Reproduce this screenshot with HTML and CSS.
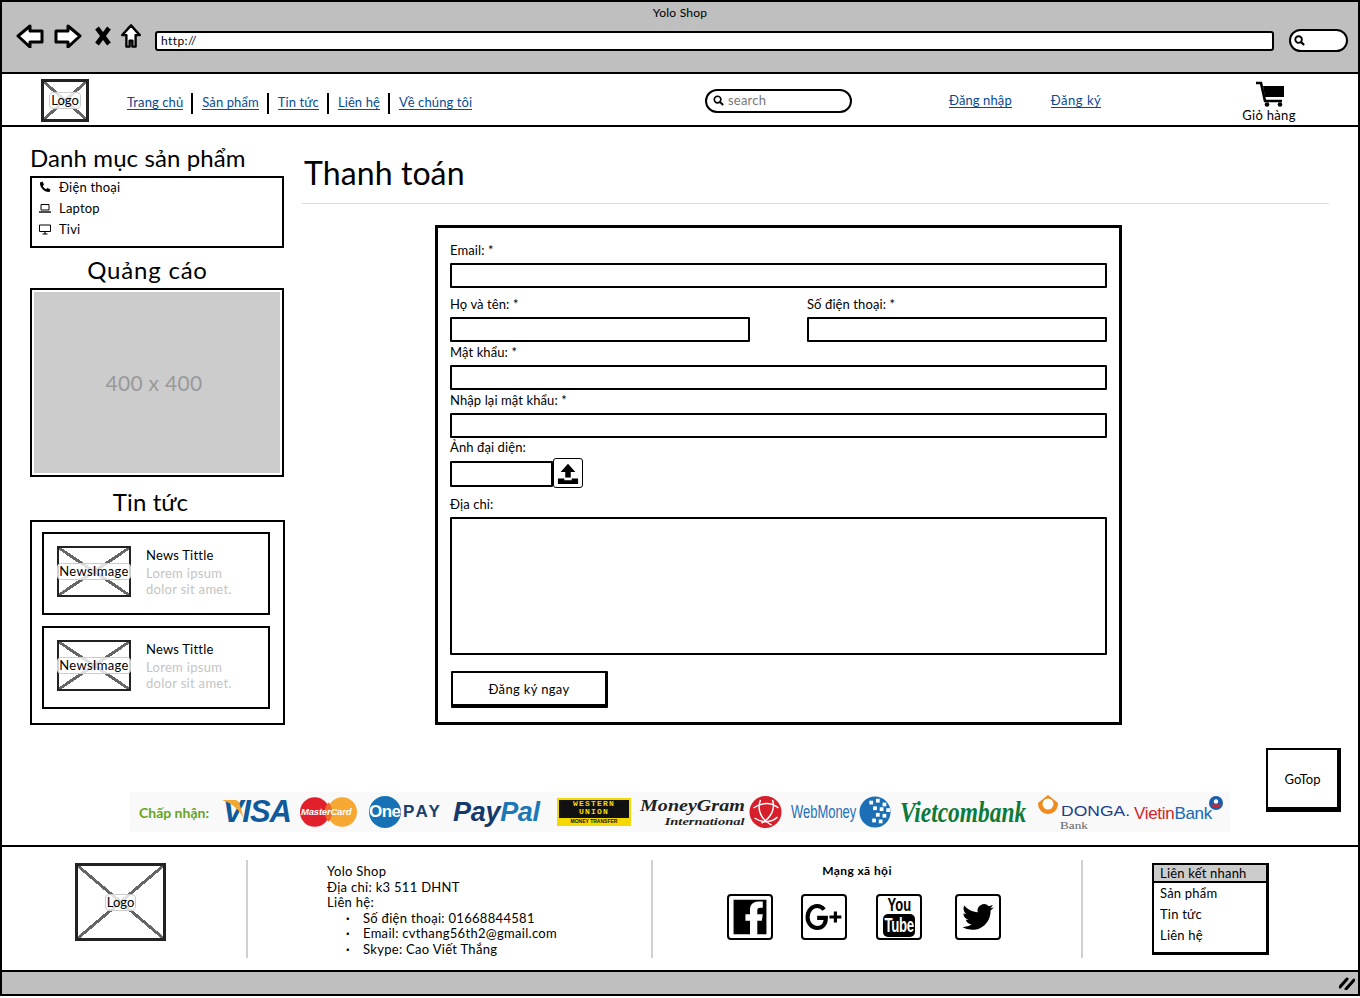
FILE: index.html
```html
<!DOCTYPE html>
<html lang="vi">
<head>
<meta charset="utf-8">
<title>Yolo Shop</title>
<link rel="stylesheet" href="styles.css">
</head>
<body>
<div class="window">
  <div class="chrome">
    <div class="chrome-title">Yolo Shop</div>
    <div class="toolbar">
      <svg class="tb-icon tb-back" viewBox="0 0 28 24"><path d="M2 12 14 2V7H26V18H14V23Z" fill="#fff" stroke="#000" stroke-width="3" stroke-linejoin="round"/></svg>
      <svg class="tb-icon tb-fwd" viewBox="0 0 28 24"><path d="M26 12 14 2V7H2V18H14V23Z" fill="#fff" stroke="#000" stroke-width="3" stroke-linejoin="round"/></svg>
      <svg class="tb-icon tb-x" viewBox="0 0 16 20"><path d="M2 2 14 18M14 2 2 18" fill="none" stroke="#000" stroke-width="4.6"/></svg>
      <svg class="tb-icon tb-home" viewBox="0 0 22 26"><path d="M11 1.500 1.500 12H6V24.500H9.500V18H12.500V24.500H16V12H20.500Z" fill="#fff" stroke="#000" stroke-width="2.600" stroke-linejoin="round"/></svg>
      <div class="url">http://</div>
      <div class="chrome-search">
        <svg class="search-glyph" viewBox="0 0 12 12"><circle cx="5" cy="5" r="3.600" fill="none" stroke="#000" stroke-width="2"/><path d="M7.500 7.500 11 11" stroke="#000" stroke-width="2.400"/></svg>
      </div>
    </div>
  </div>

  <header class="site-header">
    <div class="ph ph-logo"><span class="ph-label">Logo</span></div>
    <nav class="nav">
      <a class="link" href="#">Trang chủ</a>
      <a class="link" href="#">Sản phẩm</a>
      <a class="link" href="#">Tin tức</a>
      <a class="link" href="#">Liên hệ</a>
      <a class="link" href="#">Về chúng tôi</a>
    </nav>
    <div class="site-search">
      <svg class="search-glyph" viewBox="0 0 12 12"><circle cx="5" cy="5" r="3.600" fill="none" stroke="#000" stroke-width="1.800"/><path d="M7.500 7.500 11 11" stroke="#000" stroke-width="2.200"/></svg>
      <span>search</span>
    </div>
    <div class="auth">
      <a class="link" href="#">Đăng nhập</a>
      <a class="link" href="#">Đăng ký</a>
    </div>
    <div class="cart">
      <svg class="cart-icon" viewBox="0 0 30 26"><path d="M1 2H6L10 20H27" fill="none" stroke="#000" stroke-width="2.600"/><path d="M8 5H29V16H10Z"/><circle cx="12" cy="23.500" r="2.300"/><circle cx="25" cy="23.500" r="2.300"/></svg>
      <span>Giỏ hàng</span>
    </div>
  </header>

  <main class="main">
    <div class="content">
      <aside class="sidebar">
        <h2 class="side-title side-title-first">Danh mục sản phẩm</h2>
        <ul class="cats">
          <li><svg class="cat-icon" viewBox="0 0 12 12"><path d="M1 1.500 3.500.500 5 3.500 3.800 5C4.500 6.500 5.500 7.500 7 8.200L8.500 7 11.500 8.500 10.500 11C5.500 11.500.500 6.500 1 1.500Z"/></svg>Điện thoại</li>
          <li><svg class="cat-icon" viewBox="0 0 12 12"><path d="M2 2.500H10V8H2Z" fill="none" stroke="#000"/><path d="M0 10H12" stroke="#000" stroke-width="1.400"/></svg>Laptop</li>
          <li><svg class="cat-icon" viewBox="0 0 12 12"><path d="M.5 2H11.500V8.500H.5Z" fill="none" stroke="#000"/><path d="M3.500 11H8.500M6 8.500V11" stroke="#000" stroke-width="1.200"/></svg>Tivi</li>
        </ul>
        <h2 class="side-title side-title-ad">Quảng cáo</h2>
        <div class="ad"><div class="ad-inner">400 x 400</div></div>
        <h2 class="side-title side-title-news">Tin tức</h2>
        <div class="news">
          <article class="news-card">
            <div class="ph ph-news"><span class="ph-label">NewsImage</span></div>
            <div class="news-text">
              <h3>News Tittle</h3>
              <p>Lorem ipsum<br>dolor sit amet.</p>
            </div>
          </article>
          <article class="news-card">
            <div class="ph ph-news"><span class="ph-label">NewsImage</span></div>
            <div class="news-text">
              <h3>News Tittle</h3>
              <p>Lorem ipsum<br>dolor sit amet.</p>
            </div>
          </article>
        </div>
      </aside>

      <section class="checkout">
        <h1 class="page-title">Thanh toán</h1>
        <form class="form">
          <label class="lbl">Email: *</label>
          <input class="inp" type="text">
          <div class="two-col">
            <div>
              <label class="lbl">Họ và tên: *</label>
              <input class="inp" type="text">
            </div>
            <div>
              <label class="lbl">Số điện thoại: *</label>
              <input class="inp" type="text">
            </div>
          </div>
          <label class="lbl lbl-tight">Mật khẩu: *</label>
          <input class="inp" type="text">
          <label class="lbl lbl-tight">Nhập lại mật khẩu: *</label>
          <input class="inp" type="text">
          <label class="lbl lbl-tighter">Ảnh đại diện:</label>
          <div class="upload">
            <input class="inp inp-file" type="text">
            <div class="upload-btn">
              <svg viewBox="0 0 24 24"><path d="M12 2 20 11H15V17H9V11H4Z"/><path d="M1 18H8V20H16V18H23V24H1Z"/></svg>
            </div>
          </div>
          <label class="lbl lbl-addr">Địa chỉ:</label>
          <textarea class="area"></textarea>
          <button class="submit" type="button">Đăng ký ngay</button>
        </form>
      </section>
    </div>

    <div class="pay">
      <span class="pay-label">Chấp nhận:</span>
      <span class="logo-visa"><svg class="visa-swoosh" viewBox="0 0 24 22"><path d="M0 1H13C17 1 19 3 20 8L24 22C19 11 11 5 0 1Z" fill="#f2a732"/></svg>VISA</span>
      <span class="logo-mc"><svg viewBox="0 0 58 30"><circle cx="15" cy="15" r="15" fill="#e2202c"/><circle cx="43" cy="15" r="15" fill="#f7a833"/><path d="M29 5A15 15 0 0 1 29 25 15 15 0 0 1 29 5Z" fill="#ef6a2c"/></svg><b>MasterCard</b></span>
      <span class="logo-one"><b class="one-c">One</b><b class="one-p">PAY</b></span>
      <span class="logo-paypal"><b>Pay</b><b class="pal">Pal</b></span>
      <span class="logo-wu"><b class="wu-a">WESTERN<br>UNION</b><b class="wu-b">MONEY TRANSFER</b></span>
      <span class="logo-mg"><b class="mg-1">MoneyGram</b><b class="mg-2">International</b></span>
      <svg class="globe-red" viewBox="0 0 32 32"><circle cx="16" cy="16" r="16" fill="#d71f2b"/><path d="M4 12C12 6 22 6 29 12M5 22C12 27 22 27 28 21M11 4C7 14 12 24 22 29M23 4C26 12 22 22 12 27" fill="none" stroke="#fff" stroke-width="1.500"/></svg>
      <span class="logo-wm">WebMoney</span>
      <svg class="globe-blue" viewBox="0 0 34 34"><circle cx="17" cy="17" r="16.500" fill="#1c6fb5"/><g fill="#fff"><rect x="11" y="5" width="4" height="4"/><rect x="18" y="3" width="4" height="4"/><rect x="25" y="7" width="4" height="4"/><rect x="15" y="11" width="4" height="4"/><rect x="22" y="12" width="4" height="4"/><rect x="29" y="13" width="4" height="4"/><rect x="18" y="18" width="4" height="4"/><rect x="25" y="19" width="4" height="4"/><rect x="14" y="24" width="4" height="4"/><rect x="21" y="25" width="4" height="4"/></g></svg>
      <span class="logo-vcb">Vietcombank</span>
      <span class="logo-donga">
        <svg class="donga-ring" viewBox="0 0 22 22"><path d="M11 1 21 9C21 16 16 20 11 20 6 20 1 16 1 9Z" fill="#f08a1d"/><circle cx="11" cy="10" r="5.500" fill="#fff"/></svg>
        <span class="donga-name">DONGA.</span>
        <span class="donga-bank">Bank</span>
      </span>
      <span class="logo-vtb"><i>Vietin</i><b>Bank</b>
        <svg class="vtb-mark" viewBox="0 0 14 14"><circle cx="7" cy="7" r="7" fill="#1a5da8"/><path d="M2 8.500H12A5.500 5.500 0 0 1 2 8.500Z" fill="#d8232a"/><circle cx="7" cy="5.500" r="2.200" fill="#fff"/></svg>
      </span>
    </div>
    <a class="gotop" href="#">GoTop</a>
  </main>

  <footer class="footer">
    <div class="f-col f-logo"><div class="ph ph-flogo"><span class="ph-label">Logo</span></div></div>
    <div class="f-col f-addr">
      <div>Yolo Shop</div>
      <div>Địa chỉ: k3 511 DHNT</div>
      <div>Liên hệ:</div>
      <ul class="contact">
        <li>Số điện thoại: 01668844581</li>
        <li>Email: cvthang56th2@gmail.com</li>
        <li>Skype: Cao Viết Thắng</li>
      </ul>
    </div>
    <div class="f-col f-social">
      <div class="social-title">Mạng xã hội</div>
      <div class="social">
        <a class="soc" href="#" aria-label="Facebook"><svg viewBox="0 0 46 46"><path d="M5 4H41V42H31V27H36L37 20H31V16C31 14 32 13 34 13H37V6H32C26 6 23 10 23 15V20H18V27H23V42H5Z"/></svg></a>
        <a class="soc" href="#" aria-label="Google Plus"><svg viewBox="0 0 46 46"><path d="M23 15C21 12 18 11 15.500 11 10 11 5 16 5 23 5 30 10 35 15.500 35 21 35 25 31 25 24H15.500" fill="none" stroke="#000" stroke-width="4.500"/><path d="M29 23H42M35.500 17V29" stroke="#000" stroke-width="3.500"/></svg></a>
        <a class="soc soc-yt" href="#" aria-label="YouTube"><span class="yt-you">You</span><span class="yt-tube"><span class="yt-word">Tube</span></span></a>
        <a class="soc" href="#" aria-label="Twitter"><svg viewBox="-4 -4 32 32"><path d="M23.953 4.57a10 10 0 01-2.825.775 4.958 4.958 0 002.163-2.723c-.951.555-2.005.959-3.127 1.184a4.92 4.92 0 00-8.384 4.482C7.69 8.095 4.067 6.13 1.64 3.162a4.822 4.822 0 00-.666 2.475c0 1.71.87 3.213 2.188 4.096a4.904 4.904 0 01-2.228-.616v.06a4.923 4.923 0 003.946 4.827 4.996 4.996 0 01-2.212.085 4.936 4.936 0 004.604 3.417 9.867 9.867 0 01-6.102 2.105c-.39 0-.779-.023-1.17-.067a13.995 13.995 0 007.557 2.209c9.053 0 13.998-7.496 13.998-13.985 0-.21 0-.42-.015-.63A9.935 9.935 0 0024 4.59z"/></svg></a>
      </div>
    </div>
    <div class="f-col f-links">
      <div class="quick">
        <div class="quick-head">Liên kết nhanh</div>
        <div class="quick-item">Sản phẩm</div>
        <div class="quick-item">Tin tức</div>
        <div class="quick-item">Liên hệ</div>
      </div>
    </div>
  </footer>

  <div class="statusbar">
    <svg class="grip" viewBox="0 0 16 14"><path d="M1 11 8 3M7 13 15 4" fill="none" stroke="#000" stroke-width="3" stroke-linecap="round"/></svg>
  </div>
</div>
</body>
</html>
```

FILE: styles.css
```css
* { box-sizing: border-box; }
html, body { margin: 0; padding: 0; background: #fff; }
body {
  font-family: "Lato", "Noto Sans", "Noto Sans CJK SC", sans-serif;
  font-size: 13px;
  color: #000;
  height: 998px;
  overflow: hidden;
}
h1, h2, h3, p, ul { margin: 0; padding: 0; font-weight: 400; }
ul { list-style: none; }
a { color: inherit; text-decoration: none; }

.window {
  width: 1360px;
  height: 996px;
  border: 2px solid #000;
  display: flex;
  flex-direction: column;
  background: #fff;
}

/* browser chrome */
.chrome {
  height: 72px;
  flex: none;
  background: #bfbfbf;
  border-bottom: 2px solid #000;
  padding-top: 4px;
}
.chrome-title {
  height: 18px;
  line-height: 13px;
  text-align: center;
  font-size: 12px;
  letter-spacing: .25px;
}
.toolbar { display: flex; align-items: flex-start; padding-left: 14px; }
.tb-icon { display: block; flex: none; height: 24px; }
.tb-back { width: 28px; }
.tb-fwd { width: 28px; margin-left: 10px; }
.tb-x { width: 16px; margin-left: 13px; }
.tb-home { width: 22px; margin-left: 9px; }
.url {
  width: 1119px;
  height: 20px;
  margin: 7px 0 0 13px;
  background: #fff;
  border: 2px solid #000;
  border-radius: 3px;
  padding-left: 4px;
  line-height: 15px;
  font-size: 12px;
  letter-spacing: .4px;
}
.chrome-search {
  width: 59px;
  height: 23px;
  margin: 5px 0 0 15px;
  background: #fff;
  border: 2px solid #000;
  border-radius: 12px;
  display: flex;
  align-items: center;
  padding-left: 3px;
}
.search-glyph { width: 11px; height: 11px; flex: none; }

/* site header */
.site-header {
  height: 53px;
  flex: none;
  display: flex;
  align-items: center;
  padding-left: 39px;
  border-bottom: 2px solid #000;
}
.ph {
  flex: none;
  border: 3px solid #222;
  display: flex;
  align-items: center;
  justify-content: center;
  background:
    linear-gradient(to top right, transparent calc(50% - 1.500px), #666 calc(50% - 1.500px), #666 calc(50% + 1.500px), transparent calc(50% + 1.500px)),
    linear-gradient(to bottom right, transparent calc(50% - 1.500px), #666 calc(50% - 1.500px), #666 calc(50% + 1.500px), transparent calc(50% + 1.500px));
}
.ph-label {
  background: rgba(255, 255, 255, .8);
  border: 1px solid #ccc;
  border-radius: 4px;
  padding: 0 1px;
  line-height: 15px;
  font-size: 13px;
  white-space: nowrap;
}
.ph-logo { width: 48px; height: 43px; margin-top: 1px; }
.nav { display: flex; align-items: center; width: 345px; margin: 7px 0 0 38px; flex: none; }
.link {
  color: #0a4a94;
  border-bottom: 1px solid #0a4a94;
  line-height: 13px;
  font-size: 13px;
  letter-spacing: .1px;
  white-space: nowrap;
}
.nav .link { position: relative; }
.nav .link + .link { margin-left: 19px; }
.nav .link + .link::before {
  content: "";
  position: absolute;
  left: -11px;
  top: -3px;
  height: 21px;
  border-left: 2px solid #000;
}
.site-search {
  width: 147px;
  height: 24px;
  margin: 3px 0 0 233px;
  flex: none;
  border: 2px solid #000;
  border-radius: 12px;
  display: flex;
  align-items: center;
  gap: 4px;
  padding: 0 0 2px 6px;
  color: #777;
  font-size: 13px;
  letter-spacing: .2px;
}
.auth { display: flex; gap: 39px; margin-left: 97px; width: 294px; flex: none; margin-top: 2px; }
.auth .link:last-child { letter-spacing: .5px; }
.cart { display: flex; flex-direction: column; align-items: center; width: 52px; flex: none; margin-top: 4px; font-size: 13px; letter-spacing: .3px; line-height: 15px; }
.cart span { white-space: nowrap; margin-top: 1px; }
.cart-icon { width: 30px; height: 26px; display: block; margin-left: 1px; }

/* main */
.main { position: relative; flex: 1; display: flex; flex-direction: column; }
.content { display: grid; grid-template-columns: 255px 1027px; column-gap: 17px; padding-left: 28px; }

.side-title { font-size: 24px; line-height: 26px; letter-spacing: .1px; white-space: nowrap; }
.side-title-first { margin-top: 18px; }
.side-title-ad { margin-top: 9px; text-align: center; padding-right: 20px; letter-spacing: .8px; }
.side-title-news { margin-top: 12px; text-align: center; padding-right: 14px; }
.cats {
  margin-top: 5px;
  width: 254px;
  height: 72px;
  border: 2px solid #000;
  padding-left: 7px;
}
.cats li { height: 21px; display: flex; align-items: center; font-size: 13px; letter-spacing: .2px; }
.cat-icon { width: 12px; height: 12px; margin-right: 8px; flex: none; }
.cats li:first-child { height: 18px; margin-bottom: 1px; }
.ad { margin-top: 5px; width: 254px; height: 189px; border: 2px solid #000; padding: 2px; }
.ad-inner {
  height: 100%;
  background: #ccc;
  display: flex;
  align-items: center;
  justify-content: center;
  color: #999;
  font-size: 21px;
  letter-spacing: .3px;
  padding-right: 6px;
}
.news {
  margin-top: 5px;
  height: 205px;
  border: 2px solid #000;
  padding: 10px 13px 0 10px;
  display: flex;
  flex-direction: column;
  gap: 11px;
}
.news-card {
  height: 83px;
  border: 2px solid #000;
  padding: 12px 0 0 13px;
  display: flex;
  align-items: flex-start;
}
.ph-news { width: 74px; height: 51px; border-width: 2px; }
.ph-news .ph-label { letter-spacing: .35px; }
.news-text { margin-left: 15px; margin-top: 1px; }
.news-text h3 { font-size: 13px; line-height: 16px; letter-spacing: .2px; }
.news-text p { color: #c4c4c4; font-size: 13px; line-height: 16px; letter-spacing: .3px; margin-top: 2px; }

/* form */
.page-title { font-size: 32px; line-height: 40px; margin-top: 26px; padding-left: 2px; letter-spacing: .1px; border-bottom: 1px solid #ddd; height: 51px; }
.form {
  margin: 21px 0 0 133px;
  width: 687px;
  height: 500px;
  border: 3px solid #000;
  padding: 14px 12px 0;
  display: flex;
  flex-direction: column;
}
.lbl { display: block; height: 16px; line-height: 16px; margin-bottom: 5px; font-size: 13px; letter-spacing: .1px; white-space: nowrap; }
.inp {
  display: block;
  width: 100%;
  height: 25px;
  margin: 0;
  border: 2px solid #000;
  background: #fff;
  border-radius: 1px;
  padding: 0;
  flex: none;
}
.two-col { display: grid; grid-template-columns: 300px 300px; justify-content: space-between; margin-top: 8px; }
.lbl-tight { margin-top: 2px; }
.lbl-tighter { margin-top: 1px; margin-bottom: 3px; }
.upload { display: flex; align-items: center; height: 30px; }
.inp-file { width: 103px; height: 26px; margin-top: 2px; }
.upload-btn {
  width: 30px;
  height: 30px;
  flex: none;
  border: 1px solid #000;
  border-radius: 3px;
  padding: 3px;
  background: #fff;
}
.upload-btn svg { display: block; width: 100%; height: 100%; }
.lbl-addr { margin-top: 8px; }
.area {
  display: block;
  width: 100%;
  height: 138px;
  margin: 0;
  border: 2px solid #000;
  resize: none;
  border-radius: 1px;
  padding: 0;
  flex: none;
}
.submit {
  width: 157px;
  height: 37px;
  margin: 16px 0 0 1px;
  padding: 0;
  background: #fff;
  border: 2px solid #000;
  border-right-width: 3px;
  border-bottom-width: 4px;
  border-radius: 1px;
  font: inherit;
  letter-spacing: .35px;
  color: #000;
}

/* payment strip */
.pay {
  margin: auto 0 13px 128px;
  width: 1100px;
  height: 40px;
  background: #f9f9f9;
  display: flex;
  align-items: center;
  padding-left: 9px;
  overflow: hidden;
  flex: none;
}
.pay > * { flex: none; }
.pay-label { width: 74px; margin-right: 9px; color: #67a31d; font-weight: 700; font-size: 14px; white-space: nowrap; }
.logo-visa {
  position: relative;
  width: 69px;
  margin-right: 9px;
  font: italic 700 31px/36px "Liberation Sans", sans-serif;
  letter-spacing: -1px;
  color: #0f5a9c;
  text-align: right;
}
.visa-swoosh { position: absolute; left: 0; top: 5px; width: 22px; height: 20px; }
.logo-mc { position: relative; width: 57px; height: 30px; margin-right: 12px; }
.logo-mc svg { display: block; width: 57px; height: 30px; }
.logo-mc b { position: absolute; left: 1px; top: 9px; font: italic 700 9.500px/12px "Liberation Sans", sans-serif; color: #fff; letter-spacing: -.2px; white-space: nowrap; }
.logo-one { position: relative; width: 74px; height: 32px; margin-right: 10px; display: flex; align-items: center; }
.logo-one .one-c {
  width: 32px;
  height: 32px;
  border-radius: 50%;
  background: #1672b4;
  color: #fff;
  font: 700 17px/32px "Liberation Sans", sans-serif;
  white-space: nowrap;
  letter-spacing: -.5px;
}
.logo-one .one-p { font: 700 17px/20px "Liberation Sans", sans-serif; color: #17406f; letter-spacing: 2.400px; margin-left: 2px; }
.logo-paypal { width: 92px; margin-right: 12px; font: italic 700 27px/32px "Liberation Sans", sans-serif; color: #17386b; white-space: nowrap; letter-spacing: -.3px; }
.logo-paypal .pal { color: #1b78b8; }
.logo-wu { width: 74px; height: 28px; margin-right: 11px; background: #f5d800; padding: 2px; display: flex; flex-direction: column; font-family: "Liberation Mono", monospace; }
.wu-a { flex: 1; background: #111; color: #f5d800; font-size: 8px; line-height: 8px; text-align: center; letter-spacing: 1.200px; font-weight: 700; }
.wu-b { height: 6px; color: #111; font: 700 5px/6px "Liberation Sans", sans-serif; text-align: center; white-space: nowrap; }
.logo-mg { width: 103px; margin-right: 4px; display: flex; flex-direction: column; align-items: flex-end; font-family: "Liberation Serif", serif; font-style: italic; color: #222; }
.mg-1 { font-size: 17px; line-height: 19px; white-space: nowrap; transform: scaleX(1.18); transform-origin: right; }
.mg-2 { font-size: 11px; line-height: 13px; white-space: nowrap; transform: scaleX(1.32); transform-origin: right; }
.globe-red { width: 33px; height: 32px; margin-right: 9px; }
.logo-wm { width: 66px; margin-right: 1px; color: #1f6fb6; font: 400 18px/24px "Liberation Sans", sans-serif; transform: scaleX(.72); transform-origin: left; white-space: nowrap; }
.globe-blue { width: 34px; height: 32px; margin-right: 8px; }
.logo-vcb { width: 126px; margin-right: 11px; color: #0d7a3a; font: italic 700 30px/32px "Liberation Serif", serif; transform: scaleX(.78); transform-origin: left; white-space: nowrap; }
.logo-donga { position: relative; width: 89px; height: 40px; margin-right: 8px; }
.donga-ring { position: absolute; left: 0; top: 2px; width: 22px; height: 22px; }
.donga-name { position: absolute; left: 24px; top: 11px; color: #1b3e8c; font: 400 14px/16px "Liberation Sans", sans-serif; white-space: nowrap; transform: scaleX(1.25); transform-origin: left; }
.donga-bank { position: absolute; left: 23px; top: 27px; color: #666; font: 400 11px/13px "Liberation Serif", serif; transform: scaleX(1.2); transform-origin: left; }
.logo-vtb { position: relative; width: 91px; font: 400 17px/20px "Liberation Sans", sans-serif; white-space: nowrap; margin-top: 4px; letter-spacing: -.3px; }
.logo-vtb i { font-style: normal; color: #d8232a; }
.logo-vtb b { font-weight: 400; color: #1668b2; }
.vtb-mark { position: absolute; right: 2px; top: -8px; width: 14px; height: 14px; }
.gotop {
  position: absolute;
  right: 17px;
  bottom: 33px;
  width: 75px;
  height: 64px;
  border: 2px solid #000;
  border-right-width: 4px;
  border-bottom-width: 5px;
  display: flex;
  align-items: center;
  justify-content: center;
  font-size: 13px;
  background: #fff;
}

/* footer */
.footer {
  height: 125px;
  flex: none;
  border-top: 2px solid #000;
  padding: 13px 0 12px;
  display: grid;
  grid-template-columns: 244px 405px 430px 1fr;
}
.f-col { height: 98px; padding-top: 3px; }
.f-col + .f-col { border-left: 2px solid #d0d0d0; }
.f-logo { padding-left: 73px; }
.ph-flogo { width: 91px; height: 78px; }
.f-addr { padding: 4px 0 0 79px; font-size: 13px; line-height: 15.600px; letter-spacing: .3px; white-space: nowrap; }
.contact { padding-left: 36px; }
.contact li { position: relative; }
.contact li::before { content: "·"; position: absolute; left: -17px; font-weight: 700; }
.f-social { padding-left: 74px; }
.social-title { height: 16px; line-height: 16px; text-align: center; width: 262px; margin-left: -1px; font-weight: 700; font-size: 12px; letter-spacing: .4px; white-space: nowrap; }
.social { display: flex; margin-top: 15px; }
.soc {
  width: 46px;
  height: 46px;
  flex: none;
  border: 2px solid #000;
  border-radius: 4px;
  background: #fff;
  margin-right: 28px;
}
.soc:nth-child(2) { margin-right: 29px; }
.soc:nth-child(3) { margin-right: 33px; }
.soc svg { display: block; width: 100%; height: 100%; margin: 0; }
.soc-yt { display: flex; flex-direction: column; align-items: center; font-family: "Liberation Sans", sans-serif; font-weight: 700; }
.yt-you { font-size: 18px; line-height: 18px; transform: scaleX(.72); }
.yt-tube { width: 32px; height: 23px; background: #000; color: #fff; border-radius: 5px; display: flex; justify-content: center; overflow: hidden; }
.yt-word { font-size: 20px; line-height: 23px; transform: scaleX(.66); flex: none; letter-spacing: -.5px; }
.f-links { padding-left: 69px; }
.quick { width: 117px; height: 92px; border: 2px solid #000; border-bottom-width: 3px; border-right-width: 3px; font-size: 13px; letter-spacing: .2px; }
.quick-head { height: 18px; background: #ccc; border-bottom: 2px solid #000; padding-left: 6px; line-height: 17px; white-space: nowrap; }
.quick-item { height: 21px; line-height: 20px; padding-left: 6px; white-space: nowrap; }

.statusbar {
  height: 24px;
  flex: none;
  background: #bfbfbf;
  border-top: 2px solid #000;
  display: flex;
  justify-content: flex-end;
  align-items: center;
  padding-right: 3px;
}
.grip { width: 16px; height: 14px; display: block; }
```
